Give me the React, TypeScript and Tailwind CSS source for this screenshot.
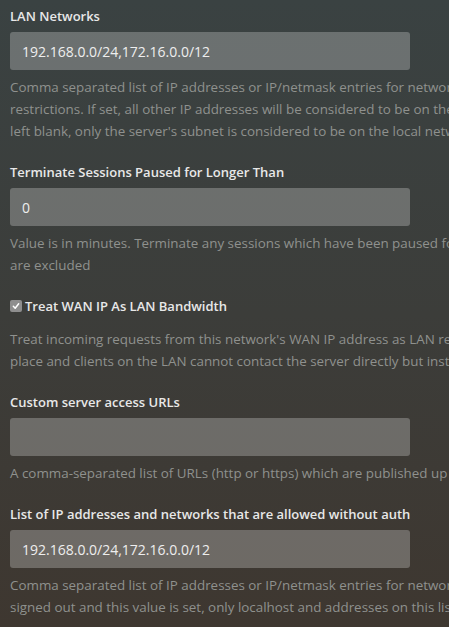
const font = { fontFamily: '"Open Sans", "Noto Sans", sans-serif' };

type FieldProps = {
  label: string;
  value?: string;
  help: string[];
};

function Help({ lines }: { lines: string[] }) {
  return (
    <div className="mt-1.5 text-[13.4px] leading-[22px] text-[#8f918e]">
      {lines.map((l) => (
        <div key={l} className="whitespace-nowrap">
          {l}
        </div>
      ))}
    </div>
  );
}

function TextField({ label, value = "", help }: FieldProps) {
  return (
    <div>
      <label className="block h-5 text-[13px] font-semibold leading-5 text-[#e8e8e8]">{label}</label>
      <input
        readOnly
        value={value}
        className="mt-1.5 block h-[38px] w-[400px] rounded-[3px] bg-white/25 px-3 text-[14px] text-[#eeeeee] outline-none"
        style={font}
      />
      <Help lines={help} />
    </div>
  );
}

function CheckField({ label, help }: { label: string; help: string[] }) {
  return (
    <div>
      <label className="flex h-5 items-center gap-[3px] text-[13px] font-semibold leading-5 text-[#e8e8e8]">
        <span className="flex h-3 w-3 items-center justify-center rounded-[2px] bg-[#8e8e8e]">
          <svg viewBox="0 0 12 12" className="h-2.5 w-2.5" fill="none" stroke="#fff" strokeWidth="1.8" strokeLinecap="round" strokeLinejoin="round">
            <path d="M2.8 6.4 5 8.6 9.2 3.4" />
          </svg>
        </span>
        {label}
      </label>
      <div className="mt-3">
        <Help lines={help} />
      </div>
    </div>
  );
}

export default function App() {
  return (
    <main
      className="h-[627px] w-[449px] overflow-hidden bg-gradient-to-b from-[#3a4242] via-[#3c3d3a] to-[#3e3730]"
      style={font}
    >
      <div className="flex w-[900px] flex-col gap-5 px-2.5 pt-1.5">
        <TextField
          label="LAN Networks"
          value="192.168.0.0/24,172.16.0.0/12"
          help={[
            "Comma separated list of IP addresses or IP/netmask entries for networks that will be considered to be on the local network when enforcing bandwidth",
            "restrictions. If set, all other IP addresses will be considered to be on the external network and and will be subject to external network bandwidth restrictions. If",
            "left blank, only the server's subnet is considered to be on the local network.",
          ]}
        />
        <TextField
          label="Terminate Sessions Paused for Longer Than"
          value="0"
          help={[
            "Value is in minutes. Terminate any sessions which have been paused for longer than this. Sessions from the local network and from users with Plex Pass",
            "are excluded",
          ]}
        />
        <CheckField
          label="Treat WAN IP As LAN Bandwidth"
          help={[
            "Treat incoming requests from this network's WAN IP address as LAN requests in terms of bandwidth. This often occurs when DNS rebinding protection is in",
            "place and clients on the LAN cannot contact the server directly but instead have to connect via the WAN IP address.",
          ]}
        />
        <TextField
          label="Custom server access URLs"
          help={["A comma-separated list of URLs (http or https) which are published up to plex.tv for server discovery."]}
        />
        <TextField
          label="List of IP addresses and networks that are allowed without auth"
          value="192.168.0.0/24,172.16.0.0/12"
          help={[
            "Comma separated list of IP addresses or IP/netmask entries for networks that are allowed to access Plex Media Server without logging in. When the server is",
            "signed out and this value is set, only localhost and addresses on this list will be allowed.",
          ]}
        />
      </div>
    </main>
  );
}
